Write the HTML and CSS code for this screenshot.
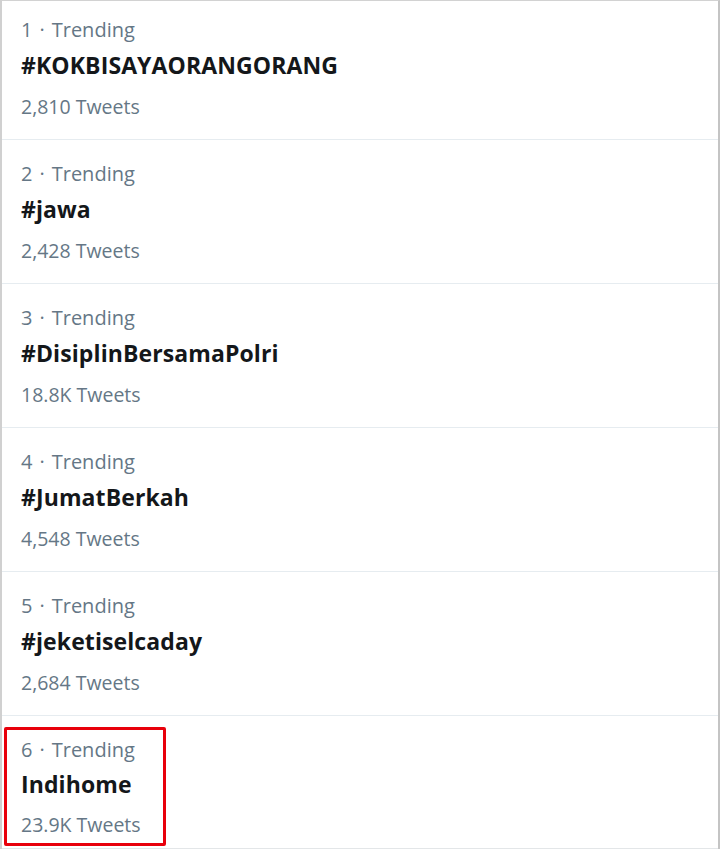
FILE: index.html
```html
<!DOCTYPE html>
<html>
<head>
<meta charset="utf-8">
<link rel="stylesheet" href="styles.css">
</head>
<body>
<div class="list">
  <div class="trend first">
    <div class="meta">1<span class="dot">·</span>Trending</div>
    <div class="name">#KOKBISAYAORANGORANG</div>
    <div class="count">2,810 Tweets</div>
  </div>
  <div class="trend">
    <div class="meta">2<span class="dot">·</span>Trending</div>
    <div class="name">#jawa</div>
    <div class="count">2,428 Tweets</div>
  </div>
  <div class="trend">
    <div class="meta">3<span class="dot">·</span>Trending</div>
    <div class="name">#DisiplinBersamaPolri</div>
    <div class="count">18.8K Tweets</div>
  </div>
  <div class="trend">
    <div class="meta">4<span class="dot">·</span>Trending</div>
    <div class="name">#JumatBerkah</div>
    <div class="count">4,548 Tweets</div>
  </div>
  <div class="trend">
    <div class="meta">5<span class="dot">·</span>Trending</div>
    <div class="name">#jeketiselcaday</div>
    <div class="count">2,684 Tweets</div>
  </div>
  <div class="trend last">
    <div class="highlight">
      <div class="meta">6<span class="dot">·</span>Trending</div>
      <div class="name">Indihome</div>
      <div class="count">23.9K Tweets</div>
    </div>
  </div>
</div>
</body>
</html>
```
FILE: styles.css
```css
html, body {
  margin: 0;
  padding: 0;
  background: #fff;
}
body {
  width: 720px;
  height: 852px;
  overflow: hidden;
  font-family: "Open Sans", "Noto Sans", sans-serif;
}
.list {
  border-top: 1px solid #d2d2d2;
  border-left: 2px solid #d0d0d0;
  border-right: 2px solid #c4c4c4;
  box-sizing: border-box;
  width: 720px;
}
.trend {
  box-sizing: border-box;
  height: 144px;
  border-bottom: 1px solid #e6ecf0;
  padding: 20px 0 0 19px;
}
.trend.first {
  height: 139px;
  padding-top: 15px;
}
.trend.last {
  height: 133px;
  padding: 11px 0 0 2px;
  border-bottom: 1px solid #e3e6e8;
}
.meta {
  font-size: 20px;
  line-height: 28px;
  color: #657786;
  white-space: nowrap;
}
.dot {
  margin: 0 7px 0 7px;
}
.name {
  font-size: 23px;
  letter-spacing: 0.1px;
  line-height: 42px;
  font-weight: 700;
  color: #14171a;
  white-space: nowrap;
}
.count {
  font-size: 19.5px;
  line-height: 42px;
  color: #657786;
  white-space: nowrap;
}
.highlight {
  box-sizing: border-box;
  width: 162px;
  height: 119px;
  border: 3px solid #e8000b;
  border-radius: 2px;
  padding: 6px 0 0 14px;
}
.highlight .name {
  line-height: 40px;
}
.highlight .count {
  line-height: 30px;
  margin-top: 6px;
}
```
